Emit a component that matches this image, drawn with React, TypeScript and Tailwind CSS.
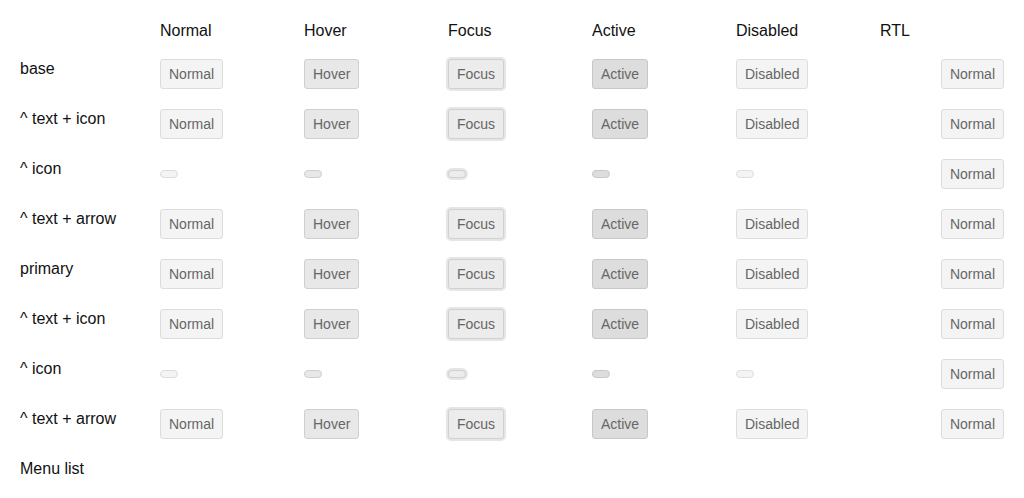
import React from "react";

type State = "normal" | "hover" | "focus" | "active" | "disabled" | "rtl";

const columns: { key: State; title: string; label: string }[] = [
  { key: "normal", title: "Normal", label: "Normal" },
  { key: "hover", title: "Hover", label: "Hover" },
  { key: "focus", title: "Focus", label: "Focus" },
  { key: "active", title: "Active", label: "Active" },
  { key: "disabled", title: "Disabled", label: "Disabled" },
  { key: "rtl", title: "RTL", label: "Normal" },
];

const rows = [
  { label: "base", icon: false },
  { label: "^ text + icon", icon: false },
  { label: "^ icon", icon: true },
  { label: "^ text + arrow", icon: false },
  { label: "primary", icon: false },
  { label: "^ text + icon", icon: false },
  { label: "^ icon", icon: true },
  { label: "^ text + arrow", icon: false },
];

const stateClass: Record<State, string> = {
  normal: "bg-[#f4f4f4] border-[#dcdcdc]",
  hover: "bg-[#e8e8e8] border-[#cfcfcf]",
  focus: "bg-[#ececec] border-[#d0d0d0] shadow-[0_0_0_2px_#e6e6e6]",
  active: "bg-[#dddddd] border-[#c8c8c8] text-[#555]",
  disabled: "bg-[#f4f4f4] border-[#dedede]",
  rtl: "bg-[#f4f4f4] border-[#dcdcdc]",
};

function Btn({ state, label, icon }: { state: State; label: string; icon: boolean }) {
  // the rtl column always shows the text button
  if (icon && state !== "rtl") {
    return (
      <button
        disabled={state === "disabled"}
        className={`w-[18px] h-2 rounded-full border ${stateClass[state]}`}
      />
    );
  }
  return (
    <button
      disabled={state === "disabled"}
      className={`h-[30px] px-2 rounded-[3px] border text-sm leading-5 text-[#666] ${stateClass[state]}`}
    >
      {label}
    </button>
  );
}

export default function App() {
  return (
    <div
      className="bg-white min-h-screen px-5 pt-[21px] text-[#111]"
      style={{ fontFamily: '"Liberation Sans", Arial, sans-serif' }}
    >
      <div className="grid grid-cols-[140px_144px_144px_144px_144px_144px_124px] h-5 text-base leading-5">
        <div />
        {columns.map((c) => (
          <div key={c.key}>{c.title}</div>
        ))}
      </div>

      <div className="flex flex-col gap-5 mt-[18px]">
        {rows.map((r, i) => (
          <div
            key={i}
            className="grid grid-cols-[140px_144px_144px_144px_144px_144px_124px] h-[30px]"
          >
            <div className="text-base leading-5">{r.label}</div>
            {columns.map((c) => (
              <div
                key={c.key}
                className={`flex items-center ${c.key === "rtl" ? "justify-end" : ""}`}
              >
                <Btn state={c.key} label={c.label} icon={r.icon} />
              </div>
            ))}
          </div>
        ))}
        <div className="text-base leading-5">Menu list</div>
      </div>
    </div>
  );
}
